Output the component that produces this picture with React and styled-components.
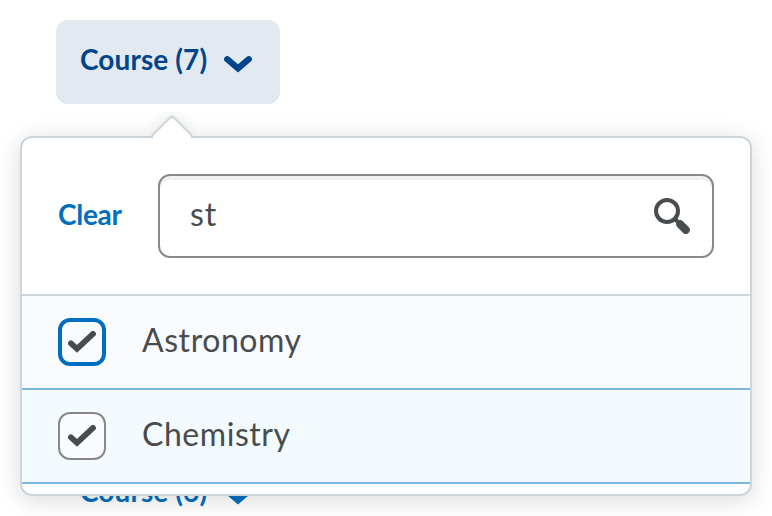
import React, { useState } from "react";
import styled, { createGlobalStyle, css } from "styled-components";

const GlobalStyle = createGlobalStyle`
  *, *::before, *::after { box-sizing: border-box; }
  body {
    margin: 0;
    overflow: hidden;
    background: #fff;
    color: #494c4e;
    font-family: Lato, "Liberation Sans", sans-serif;
  }
`;

const Page = styled.main`
  position: relative;
  display: flex;
  flex-direction: column;
  align-items: flex-start;
  gap: 348px;
  width: 772px;
  height: 516px;
  padding: 20px 0 0 56px;
  overflow: hidden;
`;

const FilterButton = styled.button`
  flex: none;
  display: flex;
  align-items: center;
  gap: 16px;
  width: 224px;
  height: 84px;
  padding: 0 24px 6px;
  border: 0;
  border-radius: 12px;
  background: ${(p) => (p.$open ? "#e3e9f1" : "transparent")};
  color: ${(p) => (p.$open ? "#004489" : "#006fbf")};
  font: 700 28px/40px Lato, sans-serif;
  letter-spacing: 0.1px;
  white-space: nowrap;
`;

const ButtonLabel = styled.span`
  width: 128px;
  text-align: left;
`;

const ChevronSvg = styled.svg`
  flex: none;
  margin-top: 10px;
`;

const Dropdown = styled.section`
  position: absolute;
  top: 136px;
  left: 20px;
  width: 732px;
  height: 360px;
  border: 2px solid #cdd5dc;
  border-radius: 12px;
  background: #fff;
  box-shadow: 0 4px 24px rgba(0, 0, 0, 0.15);
`;

const PointerClip = styled.div`
  position: absolute;
  top: -26px;
  left: 121px;
  width: 54px;
  height: 26px;
  overflow: hidden;

  &::before {
    content: "";
    position: absolute;
    top: 9px;
    left: 13px;
    width: 32px;
    height: 32px;
    border: 2px solid #cdd5dc;
    border-radius: 4px;
    background: #fff;
    box-shadow: -4px -4px 12px -1px rgba(73, 76, 78, 0.1);
    transform: rotate(45deg);
  }
`;

const SearchHeader = styled.header`
  display: flex;
  align-items: center;
  gap: 36px;
  height: 158px;
  padding: 0 36px;
  border-bottom: 2px solid #cdd5dc;
`;

const ClearButton = styled.button`
  width: 64px;
  margin-bottom: 4px;
  padding: 0;
  border: 0;
  background: none;
  color: #006fbf;
  font: 700 28px/40px Lato, sans-serif;
  letter-spacing: -0.3px;
  text-align: left;
  white-space: nowrap;
`;

const SearchField = styled.label`
  flex: 1;
  display: flex;
  align-items: center;
  height: 84px;
  padding: 0 22px 0 30px;
  border: 2px solid #86898c;
  border-radius: 12px;
  background: #fff;
  box-shadow: inset 0 4px 0 #eff0f2;
`;

const SearchInput = styled.input`
  flex: 1;
  min-width: 0;
  height: 48px;
  margin-bottom: 4px;
  padding: 0;
  border: 0;
  outline: 0;
  background: none;
  color: #494c4e;
  font: 400 32px/48px Lato, sans-serif;
  letter-spacing: 0.8px;
`;

const OptionList = styled.ul`
  margin: 0;
  padding: 0;
  list-style: none;
`;

const Option = styled.li`
  display: flex;
  align-items: center;
  gap: 36px;
  height: 94px;
  padding: 0 36px;
  border-bottom: 2px solid #79b5df;
  background: ${(p) => (p.$selected ? "#f3fbff" : "#f9fbff")};
`;

const Checkbox = styled.span`
  display: grid;
  place-items: center;
  width: 48px;
  height: 48px;
  border-radius: 12px;
  background: #f9fbff;
  ${(p) =>
    p.$focused
      ? css`border: 4px solid #006fbf;`
      : css`border: 2px solid #86898c;`}
`;

const OptionLabel = styled.span`
  margin-bottom: 4px;
  font-size: 32px;
  line-height: 48px;
  letter-spacing: 0.55px;
`;

const Chevron = () => (
  <ChevronSvg width="28" height="18" viewBox="0 0 28 18" fill="none">
    <path d="M3.2 4.2 14 13.4 24.8 4.2" stroke="currentColor" strokeWidth="6.2" strokeLinecap="round" strokeLinejoin="miter" />
  </ChevronSvg>
);

const SearchIcon = () => (
  <svg width="36" height="36" viewBox="0 0 36 36" fill="none" stroke="#494c4e">
    <circle cx="13" cy="13" r="11" strokeWidth="4" />
    <path d="m20 20 5 5" strokeWidth="4" />
    <path d="m26.3 26.3 5.5 5.5" strokeWidth="8" strokeLinecap="round" />
  </svg>
);

const Check = () => (
  <svg width="28" height="22" viewBox="0 0 28 22" fill="none">
    <path d="M3 12.3 9 17.8 25 2.9" stroke="#494c4e" strokeWidth="5.8" strokeLinecap="round" />
  </svg>
);

const options = ["Astronomy", "Chemistry"];

export default function App() {
  const [query, setQuery] = useState("st");
  return (
    <>
      <GlobalStyle />
      <Page>
        <FilterButton $open>
          <ButtonLabel>Course (7)</ButtonLabel>
          <Chevron />
        </FilterButton>
        <FilterButton>
          <ButtonLabel>Course (6)</ButtonLabel>
          <Chevron />
        </FilterButton>
        <Dropdown>
          <PointerClip />
          <SearchHeader>
            <ClearButton>Clear</ClearButton>
            <SearchField>
              <SearchInput value={query} onChange={(e) => setQuery(e.target.value)} />
              <SearchIcon />
            </SearchField>
          </SearchHeader>
          <OptionList>
            {options.map((name, i) => (
              <Option key={name} $selected={i === 1}>
                <Checkbox $focused={i === 0}>
                  <Check />
                </Checkbox>
                <OptionLabel>{name}</OptionLabel>
              </Option>
            ))}
          </OptionList>
        </Dropdown>
      </Page>
    </>
  );
}
